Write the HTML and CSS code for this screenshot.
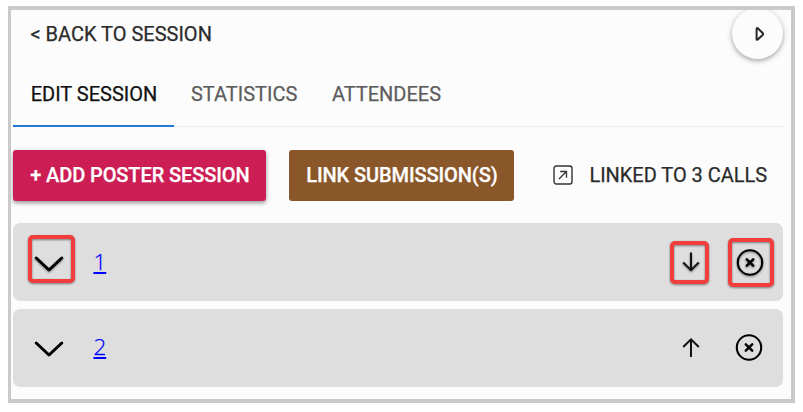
FILE: index.html
```html
<!DOCTYPE html>
<html lang="en">
<head>
<meta charset="utf-8">
<title>Edit session</title>
<link rel="stylesheet" href="styles.css">
</head>
<body>
<main class="panel">
  <header class="top">
    <a class="back">&lt; BACK TO SESSION</a>
    <button class="play" aria-label="Expand">
      <svg width="12" height="16" viewBox="0 0 12 16"><path d="M2.6 2.9Q2.6 1.5 3.8 2.3L8.6 7Q9.5 8 8.6 9L3.8 13.5Q2.6 14.4 2.6 13Z" fill="none" stroke="#252525" stroke-width="2"/></svg>
    </button>
  </header>
  <nav class="tabs">
    <a class="tab active">EDIT SESSION</a>
    <a class="tab">STATISTICS</a>
    <a class="tab">ATTENDEES</a>
  </nav>
  <div class="actions">
    <button class="btn add">+ ADD POSTER SESSION</button>
    <button class="btn link">LINK SUBMISSION(S)</button>
    <a class="linked">
      <svg width="20" height="20" viewBox="0 0 20 20" fill="none" stroke="#333"><rect x="1" y="1" width="18" height="18" rx="2.2" stroke-width="1.4"/><path d="M6 14 13.2 6.8M7.2 6.5H13.5V12.8" stroke-width="1.3"/></svg>
      <span>LINKED TO 3 CALLS</span>
    </a>
  </div>
  <section class="rows">
    <div class="row first">
      <span class="icon chevron marked"><svg width="30" height="18" viewBox="0 0 30 18"><path d="M2.2 3 15 15 27.8 3" fill="none" stroke="#000" stroke-width="3" stroke-linecap="round" stroke-linejoin="round"/></svg></span>
      <a class="number" href="#">1</a>
      <span class="icon arrow marked"><svg width="20" height="22" viewBox="0 0 20 22"><path d="M10 1.5V19M2.2 11.5 10 19.2 17.8 11.5" fill="none" stroke="#111" stroke-width="2"/></svg></span>
      <span class="icon remove marked"><svg width="28" height="28" viewBox="0 0 28 28" fill="none" stroke="#000"><circle cx="14" cy="14.5" r="12.2" stroke-width="2.1"/><path d="M10.8 11.3 17.2 17.7M17.2 11.3 10.8 17.7" stroke-width="2.5" stroke-linecap="round"/></svg></span>
    </div>
    <div class="row">
      <span class="icon chevron"><svg width="30" height="18" viewBox="0 0 30 18"><path d="M2.2 3 15 15 27.8 3" fill="none" stroke="#000" stroke-width="3" stroke-linecap="round" stroke-linejoin="round"/></svg></span>
      <a class="number" href="#">2</a>
      <span class="icon arrow"><svg width="20" height="22" viewBox="0 0 20 22"><path d="M10 20V2.5M2.2 10 10 2.3 17.8 10" fill="none" stroke="#111" stroke-width="2"/></svg></span>
      <span class="icon remove"><svg width="28" height="28" viewBox="0 0 28 28" fill="none" stroke="#000"><circle cx="14" cy="13.5" r="12.2" stroke-width="2.1"/><path d="M10.8 10.3 17.2 16.7M17.2 10.3 10.8 16.7" stroke-width="2.5" stroke-linecap="round"/></svg></span>
    </div>
  </section>
</main>
</body>
</html>
```
FILE: styles.css
```css
* { box-sizing: border-box; }
body {
  margin: 0;
  padding: 6px 8px 9px;
  background: #fff;
  font: 400 20px/24px Roboto, sans-serif;
  color: #2b2b2b;
}
.panel {
  width: 787px;
  height: 397px;
  border: 4px solid #cacaca;
  border-left-width: 3px;
  background: #fcfcfc;
  padding: 0 8px 0 2.4px;
  overflow: hidden;
}
svg { display: block; flex: none; }
button { font: inherit; border: 0; padding: 0; }
a, button { white-space: nowrap; }
.top {
  display: flex;
  justify-content: space-between;
  height: 56px;
  padding-left: 17px;
}
.back, .tab, .linked { -webkit-text-stroke: .25px; }
.back { padding-top: 12px; }
.play {
  display: flex;
  align-items: center;
  justify-content: center;
  width: 51px;
  height: 51px;
  margin-top: -2px;
  padding-left: 4px;
  border-radius: 50%;
  background: #fcfcfc;
  box-shadow: 0 2px 4px rgba(0,0,0,.28), 0 1px 8px rgba(0,0,0,.1);
}
.tabs {
  display: flex;
  height: 61px;
  border-bottom: 1px solid #ececec;
  color: #5c5c5c;
}
.tab { height: 61px; padding: 16px 17.3px 0; }
.active { width: 160.3px; border-bottom: 2px solid #2079d2; color: #111; }
.actions { display: flex; align-items: center; height: 50px; margin-top: 23px; }
.btn { height: 51px; border-radius: 3px; color: #fff; font-weight: 500; -webkit-text-stroke: .25px; }
.add { width: 253px; background: #cc1d54; box-shadow: 0 2px 4px rgba(0,0,0,.4); letter-spacing: -.1px; }
.link { width: 225px; margin-left: 23px; background: #8a572a; letter-spacing: -.1px; }
.linked { display: flex; align-items: center; gap: 16px; margin-left: 39px; letter-spacing: -.03px; }
.rows { display: grid; gap: 8px; margin-top: 23px; }
.row {
  display: flex;
  align-items: center;
  height: 78px;
  padding: 0 9px 0 15px;
  border-radius: 7px;
  background: #dedede;
}
.icon {
  display: flex;
  align-items: center;
  justify-content: center;
  flex: none;
  border: 4px solid transparent;
  border-radius: 5px;
}
.marked { border-color: #f23d3d; filter: drop-shadow(0 1px 1px rgba(0,0,0,.45)); }
.chevron { width: 47px; height: 48px; margin-bottom: 7px; padding: 9px 5px 0 0; }
.first .chevron { padding-top: 11px; }
.number {
  margin: 0 0 2px 18px;
  font: 300 22.5px/28px "Open Sans", sans-serif;
  color: #00f;
  -webkit-text-stroke: .25px;
  text-decoration-thickness: 2px;
  text-underline-offset: 2px;
}
.first .number { margin-bottom: 0; }
.arrow { width: 39px; height: 43px; margin-left: auto; padding-left: 2px; }
.remove { width: 46px; height: 49px; margin-left: 19px; padding-right: 4px; }
.first .remove { padding-right: 3px; }
```
